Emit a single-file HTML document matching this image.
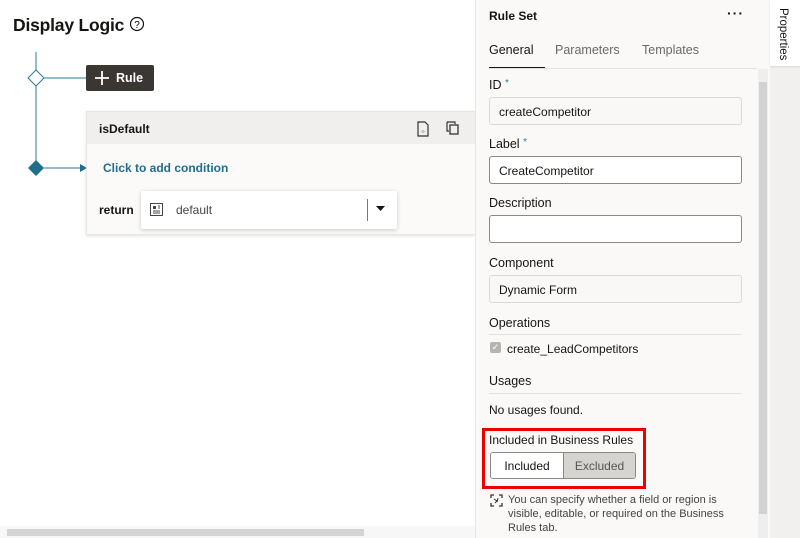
<!DOCTYPE html>
<html><head><style>
*{box-sizing:border-box;margin:0;padding:0}
body{width:800px;height:538px;overflow:hidden;background:#fff;font-family:"Liberation Sans",sans-serif;color:#161513;position:relative;font-size:13px}
.abs{position:absolute}
.lbl{position:absolute;left:489px;font-size:12.5px;color:#161513}
.inp{position:absolute;left:489px;width:253px;height:28px;border:1px solid #c9c7c4;border-radius:3px;padding:7px 9px;font-size:12px;background:#fff}
.hr{position:absolute;left:489px;width:253px;height:1px;background:#e4e2df}
</style></head><body>
<div class="abs" style="left:13px;top:15px;font-size:17.5px;font-weight:bold;letter-spacing:-0.2px">Display Logic</div>
<svg class="abs" style="left:129px;top:16px" width="16" height="16"><circle cx="8" cy="8" r="6.5" fill="none" stroke="#161513" stroke-width="1.2"/><text x="8" y="12" font-size="10" text-anchor="middle" font-family="Liberation Sans">?</text></svg>
<svg class="abs" style="left:0;top:0" width="100" height="240">
<line x1="36" y1="52" x2="36" y2="168" stroke="#2b7a9b" stroke-width="1"/>
<line x1="44" y1="78" x2="86" y2="78" stroke="#2b7a9b"/>
<line x1="44" y1="168" x2="80" y2="168" stroke="#2b7a9b"/>
<polygon points="80,164 87,168 80,172" fill="#1e6e8e"/>
<polygon points="36,70 44,78 36,86 28,78" fill="#fff" stroke="#2b7a9b"/>
<polygon points="36,160 44,168 36,176 28,168" fill="#1e6e8e"/>
</svg>
<div class="abs" style="left:86px;top:65px;width:68px;height:26px;background:#3a3631;border-radius:2px;color:#fff;font-weight:bold;font-size:12.5px;padding:6px 0 0 30px">Rule</div>
<svg class="abs" style="left:94px;top:70px" width="16" height="16"><path d="M8 1v14M1 8h14" stroke="#fff" stroke-width="1.8"/></svg>
<div class="abs" style="left:86px;top:111px;width:389px;height:124px;background:#fbfaf9;border:1px solid #e8e6e3;border-right:none;box-shadow:0 1px 3px rgba(0,0,0,.12)"></div>
<div class="abs" style="left:87px;top:112px;width:388px;height:32px;background:#f1efed"></div>
<div class="abs" style="left:99px;top:122px;font-weight:bold;font-size:12px">isDefault</div>
<svg class="abs" style="left:416px;top:121px" width="14" height="16"><path d="M2 1h7l3 3v11H2z" fill="none" stroke="#333" stroke-width="1.2"/><text x="7" y="12" font-size="5" text-anchor="middle" fill="#333">‹›</text></svg>
<svg class="abs" style="left:446px;top:121px" width="14" height="14"><path d="M1 1h8v2M1 1v9h2" fill="none" stroke="#333" stroke-width="1.2"/><rect x="4" y="4" width="8" height="9" fill="none" stroke="#333" stroke-width="1.3"/></svg>
<div class="abs" style="left:103px;top:161px;font-weight:bold;color:#1f6d8e;font-size:12px">Click to add condition</div>
<div class="abs" style="left:99px;top:203px;font-weight:bold;font-size:12px">return</div>
<div class="abs" style="left:141px;top:191px;width:256px;height:38px;background:#fff;box-shadow:0 1px 4px rgba(0,0,0,.2);border-radius:2px"></div>
<svg class="abs" style="left:150px;top:203px" width="13" height="13"><rect x=".5" y=".5" width="12" height="12" fill="none" stroke="#444"/><rect x="3" y="3" width="3" height="3" fill="#444"/><path d="M8 3h2M8 5h2M3 8h7M3 10h7" stroke="#444"/></svg>
<div class="abs" style="left:176px;top:203px;font-size:12px;color:#444">default</div>
<div class="abs" style="left:367px;top:199px;width:1px;height:22px;background:#777"></div>
<svg class="abs" style="left:376px;top:206px" width="9" height="6"><polygon points="0,0 9,0 4.5,5" fill="#161513"/></svg>
<div class="abs" style="left:0;top:526px;width:475px;height:12px;background:#f7f7f7"></div>
<div class="abs" style="left:7px;top:529px;width:357px;height:7px;background:#d4d4d4"></div>
<div class="abs" style="left:475px;top:0;width:295px;height:538px;background:#faf9f8;border-left:1px solid #e8e6e3"></div>
<div class="abs" style="left:489px;top:9px;font-weight:bold;font-size:12px">Rule Set</div>
<div class="abs" style="left:727px;top:5px;font-size:14px;font-weight:bold;letter-spacing:1px">···</div>
<div class="abs" style="left:489px;top:43px;font-size:12.5px">General</div>
<div class="abs" style="left:555px;top:43px;font-size:12.5px;color:#6b6966">Parameters</div>
<div class="abs" style="left:642px;top:43px;font-size:12.5px;color:#6b6966">Templates</div>
<div class="abs" style="left:489px;top:67px;width:56px;height:2px;background:#161513"></div>
<div class="hr" style="top:68px;width:268px"></div>
<div class="abs" style="left:758px;top:69px;width:10px;height:469px;background:#eeeeee"></div>
<div class="abs" style="left:759px;top:82px;width:8px;height:432px;background:#d2d2d2"></div>
<div class="lbl" style="top:78px">ID <span style="color:#2b7a9b;font-size:10px;vertical-align:top">*</span></div>
<div class="inp" style="top:97px;background:#f9f8f7;border-color:#dcdad7">createCompetitor</div>
<div class="lbl" style="top:137px">Label <span style="color:#2b7a9b;font-size:10px;vertical-align:top">*</span></div>
<div class="inp" style="top:156px;border-color:#8b8985">CreateCompetitor</div>
<div class="lbl" style="top:196px">Description</div>
<div class="inp" style="top:215px;border-color:#8b8985"></div>
<div class="lbl" style="top:256px">Component</div>
<div class="inp" style="top:275px;background:#f9f8f7;border-color:#dcdad7">Dynamic Form</div>
<div class="lbl" style="top:316px">Operations</div>
<div class="hr" style="top:334px"></div>
<div class="abs" style="left:490px;top:342px;width:11px;height:11px;background:#b7b5b2;border-radius:2px;color:#fff;font-size:9px;text-align:center;line-height:11px">✓</div>
<div class="lbl" style="left:507px;top:342px;font-size:12px">create_LeadCompetitors</div>
<div class="lbl" style="top:374px">Usages</div>
<div class="hr" style="top:393px"></div>
<div class="lbl" style="top:403px;font-size:12px">No usages found.</div>
<div class="abs" style="left:482px;top:428px;width:164px;height:61px;border:3px solid #ee0000"></div>
<div class="lbl" style="top:433px;font-size:12px">Included in Business Rules</div>
<div class="abs" style="left:490px;top:452px;width:146px;height:27px;border:1px solid #8b8985;border-radius:3px;overflow:hidden;display:flex;font-size:12px">
<div style="width:72px;background:#fff;text-align:center;padding-top:6px">Included</div>
<div style="flex:1;background:#d6d4d1;border-left:1px solid #8b8985;text-align:center;padding-top:6px;color:#555">Excluded</div></div>
<svg class="abs" style="left:490px;top:494px" width="13" height="13"><path d="M1 4V1h3M9 1h3v3M12 9v3H9M4 12H1V9" fill="none" stroke="#333" stroke-width="1.3"/><path d="M4 5l3 2-2 2M8 4l-1 4" stroke="#333" fill="none"/></svg>
<div class="abs" style="left:508px;top:493px;width:235px;font-size:11px;line-height:14px;color:#444">You can specify whether a field or region is visible, editable, or required on the Business Rules tab.</div>
<div class="abs" style="left:770px;top:0;width:30px;height:538px;background:#f1f0ee"></div>
<div class="abs" style="left:770px;top:0;width:30px;height:66px;background:#fff;box-shadow:0 1px 2px rgba(0,0,0,.1)"></div>
<div class="abs" style="left:777px;top:8px;writing-mode:vertical-rl;font-size:11.5px">Properties</div>
</body></html>
